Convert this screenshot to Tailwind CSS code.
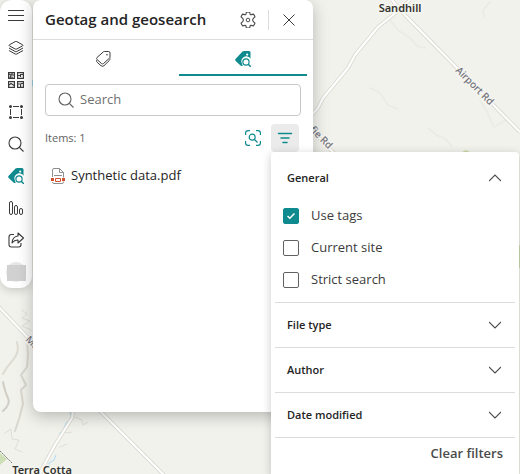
<!DOCTYPE html>
<html lang="en">
<head>
  <meta charset="UTF-8">
  <meta name="viewport" content="width=device-width, initial-scale=1.0">
  <title>Geotag and geosearch</title>
  <script src="https://cdn.jsdelivr.net/npm/@tailwindcss/browser@4"></script>
</head>
<body class="relative min-h-screen overflow-hidden bg-[#f2f2ed] font-['Open_Sans','Noto_Sans',sans-serif] text-[13px] text-[#242424]">

  <!-- Shared icons -->
  <svg class="hidden">
    <symbol id="icon-geosearch" viewBox="0 0 16 16">
      <path fill="#0f8a8f" fill-rule="evenodd" d="M7.500.600Q8.300 0 9.300 0H14q1.500 0 1.500 1.500v6.300A4.500 4.500 0 0 0 7 12.500q.2 1.200.8 2.200-1 .8-2 0L.7 10Q-.4 8.800.7 7.700ZM12.200 2.500a1.100 1.100 0 1 0 0 2.200 1.100 1.100 0 0 0 0-2.200Z"/>
      <circle cx="11" cy="11" r="3.100" fill="#fff" stroke="#0f8a8f" stroke-width="1.200"/>
      <path d="m13.200 13.200 2.700 2.700" stroke="#0f8a8f" stroke-width="1.500"/>
    </symbol>
    <symbol id="icon-search" viewBox="0 0 16 16">
      <circle cx="7" cy="7" r="6" fill="none" stroke="currentColor" stroke-width="1.100"/>
      <path d="m11.300 11.300 4.200 4.200" stroke="currentColor" stroke-width="1.100"/>
    </symbol>
    <symbol id="icon-chevron" viewBox="0 0 12 12">
      <path d="m0 3 6 6 6-6" fill="none" stroke="currentColor" stroke-width="1.100"/>
    </symbol>
  </svg>

  <!-- Map -->
  <svg class="absolute inset-0 h-full w-full" viewBox="0 0 520 474" preserveAspectRatio="xMinYMin slice" role="img" aria-label="Map" fill="none">
    <rect width="520" height="474" fill="#f2f2ed"/>
    <!-- hill shading -->
    <g stroke-linecap="round" stroke-linejoin="round">
      <path d="M17 342q3 10-4 18t-10 14" stroke="#dddbd2" stroke-width="2"/>
      <path d="M3 382q2 10 5 16t-5 13" stroke="#d0cec4" stroke-width="2"/>
      <path d="m27 340 1 15-1 12-6 8 5 10-5 5 2 14-4 15-4 12" stroke="#d9d7ce" stroke-width="2"/>
      <path d="m22 310 5 4-5 4 8 3-8 5 9 4M5 433l6-4 1 10 7 1-4 9 7 3M75 417l7 3 1 5 5-3M62 430l4 3 6-1M60 447l7-3" stroke="#dfded6"/>
      <path d="m390 20 8 10 12 8 7 8 8 2M370 88l10 5 8 12 10 4M428 128l10 8 6 2 8 8M480 100l7 12 7 15 12-7M484 17l-1-7 7-8" stroke="#ecece6" stroke-width="2"/>
    </g>
    <path d="m462 152 4-2 6 3-3 4h-7z" fill="#cbd9a8"/>
    <path d="m0 453 7 6-7 6z" fill="#cddfb4"/>
    <path d="M519 245h1v23h-1z" fill="#c9dcae"/>
    <path d="m0 451 12 12" stroke="#77776f" stroke-dasharray="2 1"/>
    <!-- streams -->
    <path d="m70 412 1 6-5 5-3 7-4 4M56 455l-2 5-5 3v4" stroke="#a9dcf6"/>
    <path d="M32 80h1v6h-1z" fill="#a9dcf6"/>
    <!-- roads -->
    <g stroke-linejoin="round">
      <path d="M392 0 403 13 520 132M410 0 393 15 378 27 355 55 348 68 323 98 318 108 305 122M300 118 360 180M-2 306 33 343 100 411 165 476M74 405 72 418 55 445 43 467 40 474" stroke="#dddcd4" stroke-width="4"/>
      <path d="M392 0 403 13 520 132M410 0 393 15 378 27 355 55 348 68 323 98 318 108 305 122M300 118 360 180M-2 306 33 343 100 411 165 476M74 405 72 418 55 445 43 467 40 474" stroke="#fff" stroke-width="2"/>
    </g>
    <!-- labels -->
    <g class="font-['Noto_Sans',sans-serif]" stroke="#f5f5f0" stroke-width="3" stroke-linejoin="round" paint-order="stroke" fill="#33332f">
      <text class="text-[11px] font-semibold" x="400" y="12" text-anchor="middle">Sandhill</text>
      <text class="text-[11px] font-semibold" x="42" y="474" text-anchor="middle">Terra Cotta</text>
      <g fill="#73737c" class="text-[10px] font-medium">
        <text transform="translate(455 71) rotate(45)">Airport Rd</text>
        <text transform="translate(295 116) rotate(45)">Mayfie Rd</text>
        <text transform="translate(25 340) rotate(45)">Mayfield</text>
      </g>
    </g>
  </svg>

  <div class="relative flex items-start gap-px">

    <!-- Toolbar -->
    <nav class="flex w-8 shrink-0 flex-col rounded-xl bg-white text-[#3b3b3b] shadow-[0_2px_10px_#00000030]" aria-label="Tools">
      <button class="grid h-8 place-items-center" aria-label="Menu">
        <svg class="size-4" viewBox="0 0 16 16" stroke="currentColor"><path d="M0 2.500h16M0 7.500h16M0 12.500h16"/></svg>
      </button>
      <button class="grid h-8 place-items-center" aria-label="Layers">
        <svg class="size-4" viewBox="0 0 16 16" fill="none" stroke="currentColor" stroke-linejoin="round"><path d="M7.200 1.600q.8-.4 1.600 0L14.600 4.800q.8.500 0 1L8.800 9q-.8.400-1.600 0L1.400 5.800q-.8-.5 0-1ZM1 8l6.200 3.500q.8.400 1.600 0L15 8M1 10.500 7.200 14q.8.400 1.600 0l6.200-3.500"/></svg>
      </button>
      <button class="grid h-8 place-items-center" aria-label="Basemaps">
        <svg class="size-4" viewBox="0 0 16 16" fill="none" stroke="currentColor" stroke-width="1.200"><path d="M.6.600h5.800v5.800H.6zM9.600.600h5.800v5.800H9.600zM.6 9.600h5.800v5.800H.6zM9.600 9.600h5.800v5.800H9.600zM1 2l2 1-1 3M4 1v2h2M4 6V4.500M9.600 3.500h2.900v-1h3M12.500 3.500v1.500M1 13l2-1.500 3 2M9.600 12h3v3.400M13 11.500h2"/></svg>
      </button>
      <button class="grid h-8 place-items-center" aria-label="Select area">
        <svg class="size-4" viewBox="0 0 16 16" fill="none" stroke="currentColor"><path d="M5 2.500h6M5 13.500h6M2.500 5v6M13.500 5v6"/><g fill="currentColor" stroke="none"><circle cx="2.500" cy="2.500" r="1.500"/><circle cx="13.500" cy="2.500" r="1.500"/><circle cx="2.500" cy="13.500" r="1.500"/><circle cx="13.500" cy="13.500" r="1.500"/></g></svg>
      </button>
      <button class="grid h-8 place-items-center" aria-label="Search map">
        <svg class="size-4"><use href="#icon-search"/></svg>
      </button>
      <button class="grid h-8 place-items-center" aria-label="Geotag and geosearch">
        <svg class="size-4"><use href="#icon-geosearch"/></svg>
      </button>
      <button class="grid h-8 place-items-center" aria-label="Charts">
        <svg class="size-4" viewBox="0 0 16 16" fill="none" stroke="currentColor"><rect x="1.500" y="1.500" width="3" height="13" rx="1.500"/><rect x="6.500" y="5.500" width="3" height="9" rx="1.500"/><rect x="11.500" y="8.500" width="3" height="6" rx="1.500"/></svg>
      </button>
      <button class="grid h-8 place-items-center" aria-label="Share">
        <svg class="size-4" viewBox="0 0 16 16" fill="none" stroke="currentColor" stroke-width="1.100" stroke-linejoin="round"><path d="M6 2.500H3.500Q1 2.500 1 5v7.500Q1 15 3.500 15h7q2.500 0 2.500-2.500V11"/><path d="M10 1v3Q4.500 4.500 4 11q2.500-3.200 6-3v3l5.500-5Z"/></svg>
      </button>
      <button class="grid h-8 place-items-center" aria-label="Account">
        <svg class="size-5" viewBox="0 0 20 20"><circle cx="10" cy="10" r="10" fill="#e6e6e6"/><path d="M1 3h19v16H1z" fill="#d1d1d1"/></svg>
      </button>
    </nav>

    <!-- Panel -->
    <main class="min-h-[412px] w-70 shrink-0 rounded-lg bg-white shadow-[0_4px_16px_#00000040]">
      <header class="flex h-10 items-center border-b border-[#dcdcdc] pl-3">
        <h1 class="flex-1 text-[15px] font-semibold">Geotag and geosearch</h1>
        <button class="grid size-8 place-items-center text-[#4a4a4a]" aria-label="Settings">
          <svg class="size-4" viewBox="0 0 16 16" fill="none" stroke="currentColor" stroke-linejoin="round"><path d="M6.600 1.100q1.400-.5 2.800 0l.4 1.600q.3.900 1.200.6l1.700-.5q1 1 1.400 2.400L12.900 6.400q-.8.600-.8 1.600t.8 1.600l1.200 1.200q-.4 1.400-1.400 2.400l-1.700-.5q-.9-.3-1.200.6l-.4 1.600q-1.400.5-2.800 0l-.4-1.600q-.3-.9-1.200-.6l-1.700.5q-1-1-1.400-2.400l1.200-1.200Q3.900 9 3.900 8t-.8-1.600L1.900 5.200q.4-1.400 1.400-2.400L5 3.300q.9.300 1.200-.6Z" transform="translate(-1.100 -1.100) scale(1.140)"/><circle cx="8" cy="8" r="1.800"/></svg>
        </button>
        <span class="mx-1 h-5 w-px bg-[#dcdcdc]"></span>
        <button class="mr-2 grid size-8 place-items-center text-[#3b3b3b]" aria-label="Close">
          <svg class="size-3" viewBox="0 0 12 12" stroke="currentColor"><path d="m.5.500 11 11M11.500.500l-11 11"/></svg>
        </button>
      </header>

      <div class="flex gap-3 px-1.5" role="tablist">
        <button class="grid h-9 flex-1 place-items-center border-b-2 border-transparent pt-1" role="tab" aria-selected="false" aria-label="Geotag">
          <svg class="size-4" viewBox="0 0 16 16" fill="none" stroke="#3b3b3b" stroke-linejoin="round"><path d="M8.300.900Q8.700.500 9.300.500H13.500q1.500 0 1.500 1.500v4q0 .6-.4 1L8.500 12.500q-1 .9-2 0L2 8.500q-1-1 0-2ZM1.500 9.300q-.2 1.200.7 2L6 14.700q1.500 1.200 3 0l5.300-5.200q.7-.8.7-2"/><circle cx="12" cy="3.700" r=".8" fill="#3b3b3b" stroke="none"/></svg>
        </button>
        <button class="grid h-9 flex-1 place-items-center border-b-2 border-[#0f8a8f] pt-1" role="tab" aria-selected="true" aria-label="Geosearch">
          <svg class="size-4"><use href="#icon-geosearch"/></svg>
        </button>
      </div>

      <label class="mx-3 mt-2 flex h-8 items-center gap-1.5 rounded border border-[#c8c8c8] px-3 text-[#616161]">
        <svg class="size-4 shrink-0"><use href="#icon-search"/></svg>
        <input type="search" placeholder="Search" aria-label="Search" class="w-full min-w-0 outline-none placeholder:text-[#707070]">
      </label>

      <div class="mt-2 flex items-center pr-3.5 pl-3">
        <p class="flex-1 pt-px text-[11px] text-[#616161]">Items: 1</p>
        <button class="mr-2.5 grid h-7 place-items-center" aria-label="Search in view">
          <svg class="size-4" viewBox="0 0 16 16" fill="none" stroke="#0f8a8f" stroke-width="1.200"><path d="M.6 5V3Q.6.600 3 .600h2M11 .600h2q2.400 0 2.400 2.400v2M15.400 11v2q0 2.400-2.400 2.400h-2M5 15.400H3Q.6 15.400.6 13v-2"/><circle cx="7.200" cy="7.200" r="3"/><path d="m9.500 9.500 3 3"/></svg>
        </button>

        <div class="relative">
          <button class="grid size-7 place-items-center rounded bg-[#ebebeb]" aria-label="Filter" aria-expanded="true">
            <svg class="size-4" viewBox="0 0 16 16" stroke="#0f8a8f" stroke-width="1.500" stroke-linecap="round"><path d="M1.500 3.500h13M4 8h8M6 12.500h4"/></svg>
          </button>

          <!-- Filter popover -->
          <section class="absolute top-full left-0 w-62 rounded bg-white px-1 pt-1 pb-2 shadow-[0_2px_10px_#00000035]">
            <div class="border-b border-[#dcdcdc] pb-1.5">
              <button class="flex h-11 w-full items-center justify-between pr-3.5 pl-3 text-[11px] font-semibold" aria-expanded="true">
                General
                <svg class="size-3 rotate-180 text-[#4a4a4a]"><use href="#icon-chevron"/></svg>
              </button>
              <label class="flex h-8 items-center gap-3 pl-2 text-[#3b3b3b]">
                <span class="grid size-4 place-items-center">
                  <input type="checkbox" checked class="peer col-start-1 row-start-1 size-4 appearance-none rounded-xs border border-[#616161] checked:border-[#0f8a8f] checked:bg-[#0f8a8f]">
                  <svg class="pointer-events-none invisible col-start-1 row-start-1 size-2 peer-checked:visible" viewBox="0 0 8 8" fill="none" stroke="#fff" stroke-width="1.500"><path d="m.5 4 2.300 2.300L7.500 1.500"/></svg>
                </span>
                Use tags
              </label>
              <label class="flex h-8 items-center gap-3 pl-2 text-[#3b3b3b]">
                <input type="checkbox" class="size-4 appearance-none rounded-xs border border-[#616161] checked:bg-[#0f8a8f]">
                Current site
              </label>
              <label class="flex h-8 items-center gap-3 pl-2 text-[#3b3b3b]">
                <input type="checkbox" class="size-4 appearance-none rounded-xs border border-[#616161] checked:bg-[#0f8a8f]">
                Strict search
              </label>
            </div>
            <button class="flex h-[45px] w-full items-center justify-between border-b border-[#dcdcdc] pr-3.5 pl-3 text-[11px] font-semibold" aria-expanded="false">
              File type
              <svg class="size-3 text-[#4a4a4a]"><use href="#icon-chevron"/></svg>
            </button>
            <button class="flex h-[45px] w-full items-center justify-between border-b border-[#dcdcdc] pr-3.5 pl-3 text-[11px] font-semibold" aria-expanded="false">
              Author
              <svg class="size-3 text-[#4a4a4a]"><use href="#icon-chevron"/></svg>
            </button>
            <button class="flex h-[45px] w-full items-center justify-between border-b border-[#dcdcdc] pr-3.5 pl-3 text-[11px] font-semibold" aria-expanded="false">
              Date modified
              <svg class="size-3 text-[#4a4a4a]"><use href="#icon-chevron"/></svg>
            </button>
            <div class="flex justify-end pr-3">
              <button class="h-8 font-semibold text-[#4a4a4a]">Clear filters</button>
            </div>
          </section>
        </div>
      </div>

      <!-- Results -->
      <ul class="mt-2 px-4">
        <li class="flex h-8 items-center gap-1.5">
          <svg class="size-4" viewBox="0 0 16 16" fill="none"><path d="M3.500 9V2q0-1.500 1.500-1.500h5.500l4 4V14q0 1.500-1.500 1.500H5q-1.500 0-1.500-1.500M10.500.500v4h4M5 7.500h8" stroke="#8f8f8f"/><path d="M3 9.500h12v4H3z" fill="#fff"/><path d="M6.500 10.500h5v3h-5z" fill="#fff" stroke="#d4512f"/><path d="M2 10h3v3H2zM13 10h3v3h-3z" fill="#d4512f"/></svg>
          <a href="#">Synthetic data.pdf</a>
        </li>
      </ul>
    </main>
  </div>

</body>
</html>
